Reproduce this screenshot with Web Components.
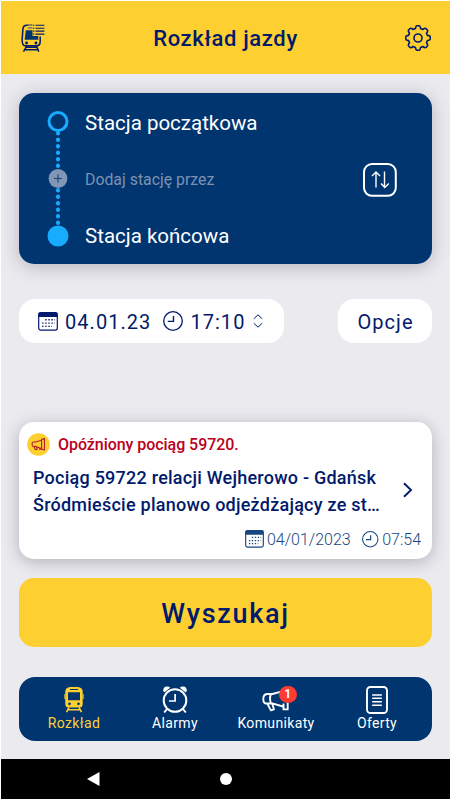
<!DOCTYPE html>
<html lang="pl">
<head>
<meta charset="utf-8">
<title>Rozkład jazdy</title>
<style>
html,body{margin:0;height:100%}
body{font-family:Roboto,"Noto Sans",sans-serif;background:#fff;overflow:hidden}
</style>
</head>
<body>
<rail-app></rail-app>
<script>
const define = (name, css, html) => customElements.define(name, class extends HTMLElement {
  constructor() {
    super();
    this.attachShadow({ mode: 'open' }).innerHTML =
      `<style>*{box-sizing:border-box}:host{box-sizing:border-box;display:block}svg{display:block;overflow:visible}${css}</style>${html}`;
  }
});

const icons = {
  schedule: [25, 30, `<g fill="none" stroke="#021a6b" stroke-width="1.6"><path d="M11 1.2H6Q2.4 1.2 2 5L1.2 16Q1 22.6 4.5 22.8H16.5Q20 22.6 20 18V13"/><path d="M6 23L2.6 28.8M16 23l2.6 5.8M5 24.2H17M4 26.9H18"/></g><path fill="#003570" d="M5 6.5H12V12.5H18V16.5H3.8Z"/><path fill="#8b8062" d="M7 0h5v2H7zM7 3h5v2H7z"/><circle cx="5.8" cy="19.8" r="1.5" fill="#021a6b"/><circle cx="15.6" cy="19.8" r="1.5" fill="#021a6b"/><path stroke="#021a6b" stroke-width="1.2" d="M12.6 1.3h1.3m1.2 0H24.4M12.6 4.4h1.3m1.2 0H24.4M12.6 7.5h1.3m1.2 0H24.4M12.6 10.6h1.3m1.2 0H24.4"/>`],
  gear: [26, 26, `<g fill="none" stroke="#021a6b" stroke-width="1.6" stroke-linejoin="round"><path d="M10.4 3.6Q10.8.8 12 .8h2q1.2 0 1.6 2.8l2.2.9q2.3-1.7 3.2-.9l1.4 1.4q.8.9-.9 3.2l.9 2.2q2.8.4 2.8 1.6v2q0 1.2-2.8 1.6l-.9 2.2q1.7 2.3.9 3.2L21 22.4q-.9.8-3.2-.9l-2.2.9q-.4 2.8-1.6 2.8h-2q-1.2 0-1.6-2.8l-2.2-.9q-2.3 1.7-3.2.9L3.6 21q-.8-.9.9-3.2l-.9-2.2Q.8 15.2.8 14v-2q0-1.2 2.8-1.6l.9-2.2Q2.8 5.9 3.6 5L5 3.6q.9-.8 3.2.9Z"/><circle cx="13" cy="13" r="4"/></g>`],
  swap: [34, 34, `<rect x="1" y="1" width="31.8" height="31.8" rx="8" fill="none" stroke="#fff" stroke-width="2"/><path fill="none" stroke="#fff" stroke-width="1.4" d="M13 24.5V9.5M9 13l4-4 4 4M21.5 8.5V24M18 20.5l3.8 4 4-4"/>`],
  calendar: [20, 19, `<rect x=".7" y=".7" width="18.6" height="17.4" rx="2" fill="none" stroke="currentColor" stroke-width="1.2"/><path fill="currentColor" d="M.5 5V2Q.5.3 2.3.3H17.7Q19.5.3 19.5 2V5Z"/><path stroke="currentColor" stroke-width="1.4" stroke-dasharray="1.4 1.7" d="M7.2 7.8H17M4.1 11.1H17M4.1 14.4H14"/>`],
  clock: [20, 20, `<circle cx="10" cy="10" r="9.3" fill="none" stroke="currentColor" stroke-width="1.3"/><path fill="none" stroke="currentColor" stroke-width="1.4" d="M10.5 5V10.4H4.8"/>`],
  updown: [10, 14, `<path fill="none" stroke="#021a6b" stroke-width="1" d="M.8 4.8 5 .8l4.2 4M.8 9.2l4.2 4 4.2-4"/>`],
  alert: [24, 24, `<circle cx="12" cy="12" r="11.8" fill="#fecf30"/><g fill="none" stroke="#b5222d" stroke-width="1.2" stroke-linejoin="round"><path d="M15 7.5 9 9.4H6.6Q5.1 9.8 5.3 12t1.5 2.1L9.3 14 15 16.2M15.2 6.6l3-.9v12l-3-.9ZM7.2 14.2l1.6 3.3 1.9-.6-1.2-2.8M13 15.5V17h2"/></g>`],
  chevron: [10, 16, `<path fill="none" stroke="#021a6b" stroke-width="1.9" d="M1 1.2 8 8 1 14.8"/>`],
  train: [20, 26, `<path fill="#fecf30" fill-rule="evenodd" d="M6 0H14Q18.2.7 18.7 4V17Q18.6 20.5 15.5 20.5H4.5Q1.4 20.5 1.3 17V4Q1.8.7 6 0ZM6 1.9V3H14V1.9ZM4 5.2V13.2H16V5.2ZM5.5 15.5A1.3 1.3 0 1 0 5.5 18.2 1.3 1.3 0 1 0 5.5 15.5ZM14.5 15.5A1.3 1.3 0 1 0 14.5 18.2 1.3 1.3 0 1 0 14.5 15.5Z"/><path fill="none" stroke="#fecf30" stroke-width="1.6" d="M5 20.5 2.5 25.2M15 20.5l2.5 4.7M4.3 22.8H15.7"/><path stroke="#fecf30" d="M.9 7V12M19.1 7V12"/>`],
  alarm: [26, 27, `<g fill="none" stroke="#fff"><circle cx="13" cy="14.5" r="11.3" stroke-width="2"/><path stroke-width="1.7" d="M13.1 8V15H7"/><path stroke-width="2" d="M5 23 2.2 26.5M21 23l2.8 3.5"/></g><path fill="#fff" d="M1.2 5.3Q1 .5 5 .4 7 .3 8.2 1.8L2.5 6.3ZM24.8 5.3Q25 .5 21 .4 19 .3 17.8 1.8L23.5 6.3Z"/>`],
  horn: [28, 24, `<g fill="none" stroke="#fff" stroke-width="1.9" stroke-linejoin="round"><path d="M20 3.3 10.5 6H5Q1.2 6.4 1.3 11.2T5 15.5l5.3-.1L21 18.5M9 6Q7 10 9 15.4M5.3 15.6l3.6 6.8 3-1.1-1.6-5.6M21.5 15.5v5.9h4.2V13.5"/></g>`],
  offer: [22, 28, `<rect x="1" y="1" width="20" height="26" rx="3.5" fill="none" stroke="#fff" stroke-width="1.9"/><path stroke="#fff" stroke-width="1.5" stroke-linecap="round" d="M6.7 9H15.3M6.7 12.3H15.3M6.7 15.7H15.3M6.7 19.2H15.3"/>`]
};

customElements.define('rail-icon', class extends HTMLElement {
  connectedCallback() {
    const [w, h, art] = icons[this.getAttribute('name')];
    const width = this.getAttribute('width') || w;
    if (!this.shadowRoot) this.attachShadow({ mode: 'open' });
    this.shadowRoot.innerHTML = `<style>:host{display:block;flex:none}svg{display:block;overflow:visible}</style><svg width="${width}" height="${width * h / w}" viewBox="0 0 ${w} ${h}">${art}</svg>`;
  }
});

define('rail-header',
  `:host{height:73px;background:#fecf30;display:grid;grid-template-columns:26px 1fr 26px;align-items:center;padding:1px 18px 0 20px}
   h1{margin:1px 2px 0 0;text-align:center;font-size:22px;font-weight:480;line-height:30px;letter-spacing:.65px;color:#021a6b}
   .gear{margin-left:-1px}`,
  `<rail-icon name="schedule" width="24"></rail-icon><h1><slot></slot></h1><rail-icon class="gear" name="gear"></rail-icon>`);

define('route-card',
  `:host{height:171px;border-radius:15px;background:#003570;color:#fff;display:grid;grid-template-columns:22px 1fr 34px;column-gap:16px;padding:18px 35px 18px 28px;box-shadow:0 3px 18px rgba(40,30,50,.26)}
   .names{display:grid;grid-template-rows:22px 1fr 22px;align-items:center;font-size:20.5px;line-height:24px;white-space:nowrap;padding-top:1px}
   .via{font-size:15.85px;color:#7d91b2}
   rail-icon{align-self:center;margin-top:1px}`,
  `<svg width="22" height="136" viewBox="0 0 22 136"><path stroke="#18acff" stroke-width="4" stroke-linecap="round" stroke-dasharray=".5 6" d="M11 22V60M11 79V116"/><circle cx="11" cy="10.5" r="9" fill="none" stroke="#18acff" stroke-width="3"/><circle cx="11" cy="67.5" r="9.4" fill="#8096b4"/><path stroke="#19447d" stroke-width="1.2" d="M7 67.5h8M11 63.5v8"/><circle cx="11" cy="125" r="10.5" fill="#18acff"/></svg>
   <div class="names"><span><slot name="from"></slot></span><span class="via"><slot name="via"></slot></span><span><slot name="to"></slot></span></div>
   <rail-icon name="swap"></rail-icon>`);

define('white-pill',
  `:host{height:44px;border-radius:16px;background:#fff;color:#021a6b;display:flex;align-items:center;font-size:20px;line-height:24px;letter-spacing:1.05px;white-space:nowrap}`,
  `<slot></slot>`);

define('news-card',
  `:host{height:137px;border-radius:15px;background:#fff;color:#021a6b;box-shadow:0 3px 16px rgba(40,30,50,.28);padding:10px 11px 0 8px}
   .top{display:flex;align-items:center;gap:8px;height:25px;color:#bb0020;font-size:16px;font-weight:500;letter-spacing:-.05px}
   .mid{display:flex;align-items:center;justify-content:space-between;padding:7px 8px 0 6px}
   .body{font-size:18px;font-weight:500;line-height:27px;white-space:nowrap;letter-spacing:.24px}
   .meta{display:flex;align-items:center;justify-content:flex-end;height:24px;margin-top:9px;color:#164781;font-size:16px;font-weight:300}
   .meta span:first-of-type{margin:0 11px 0 3px}.meta span:last-of-type{margin-left:4px}
   .mid rail-icon{margin-top:-3px}`,
  `<div class="top"><rail-icon name="alert" width="23"></rail-icon><slot name="title"></slot></div>
   <div class="mid"><div class="body"><slot name="body"></slot></div><rail-icon name="chevron"></rail-icon></div>
   <div class="meta"><rail-icon name="calendar" width="19"></rail-icon><span><slot name="date"></slot></span><rail-icon name="clock" width="16.5"></rail-icon><span><slot name="time"></slot></span></div>`);

define('search-button',
  `:host{height:69px;border-radius:15px;background:#fecf30;color:#021a6b;display:grid;place-items:center;font-size:27px;font-weight:460;letter-spacing:1.7px;line-height:34px;padding-top:3px}`,
  `<span><slot></slot></span>`);

customElements.define('nav-item', class extends HTMLElement {
  constructor() {
    super();
    const badge = this.getAttribute('badge');
    this.attachShadow({ mode: 'open' }).innerHTML = `<style>
      :host{display:flex;flex-direction:column;align-items:center;color:#fff;font-size:14px;line-height:18px;letter-spacing:.35px;white-space:nowrap}
      :host([active]){color:#fecf30}
      .art{position:relative;height:28px;display:grid;place-items:center}
      b{position:absolute;left:17px;top:0;width:17.5px;height:17.5px;border-radius:50%;background:#ff3a30;color:#fff;font:700 12px/17.5px Roboto,sans-serif;text-align:center;letter-spacing:0}
      </style><div class="art"><rail-icon name="${this.getAttribute('icon')}"></rail-icon>${badge ? `<b>${badge}</b>` : ''}</div><span><slot></slot></span>`;
  }
});

define('bottom-nav',
  `:host{height:64px;border-radius:16px;background:#003570;display:grid;grid-template-columns:repeat(4,101px);justify-content:center;padding-top:8.5px}`,
  `<slot></slot>`);

define('system-bar',
  `:host{height:40px;background:#000;display:grid;grid-template-columns:repeat(3,132px);justify-content:center;justify-items:center;align-items:center}`,
  `<svg width="13" height="14" viewBox="0 0 13 14"><path fill="#fff" d="M0 7 12.5 0V14Z"/></svg><svg width="12" height="12"><circle cx="6" cy="6" r="6" fill="#fff"/></svg>`);

define('rail-app',
  `:host{height:800px;padding:1px 0 1px 1px;display:flex;flex-direction:column;background:#fff}
   main{height:685px;background:#ebeaef;padding:19px 18px 18px;display:flex;flex-direction:column}
   .options{display:flex;justify-content:space-between;margin:35px 0 79px}
   .when{width:265px;padding-left:19px}.when rail-icon{margin-right:7px}.when .gap{margin-left:12px}.when .ud{margin:0 0 0 7.5px}
   .opt{width:94px;justify-content:center;padding:1px 0 0 1px}
   search-button{margin:19px 0 30px}
   .t{padding-top:2px}`,
  `<rail-header>Rozkład jazdy</rail-header>
  <main>
    <route-card><span slot="from">Stacja początkowa</span><span slot="via">Dodaj stację przez</span><span slot="to">Stacja końcowa</span></route-card>
    <div class="options">
      <white-pill class="when"><rail-icon name="calendar"></rail-icon><span class="t">04.01.23</span><rail-icon class="gap" name="clock"></rail-icon><span class="t">17:10</span><rail-icon class="ud" name="updown"></rail-icon></white-pill>
      <white-pill class="opt">Opcje</white-pill>
    </div>
    <news-card><span slot="title">Opóźniony pociąg 59720.</span><span slot="body">Pociąg 59722 relacji Wejherowo - Gdańsk<br>Śródmieście planowo odjeżdżający ze st…</span><span slot="date">04/01/2023</span><span slot="time">07:54</span></news-card>
    <search-button>Wyszukaj</search-button>
    <bottom-nav>
      <nav-item icon="train" active>Rozkład</nav-item><nav-item icon="alarm">Alarmy</nav-item><nav-item icon="horn" badge="1">Komunikaty</nav-item><nav-item icon="offer">Oferty</nav-item>
    </bottom-nav>
  </main>
  <system-bar></system-bar>`);
</script>
</body>
</html>
